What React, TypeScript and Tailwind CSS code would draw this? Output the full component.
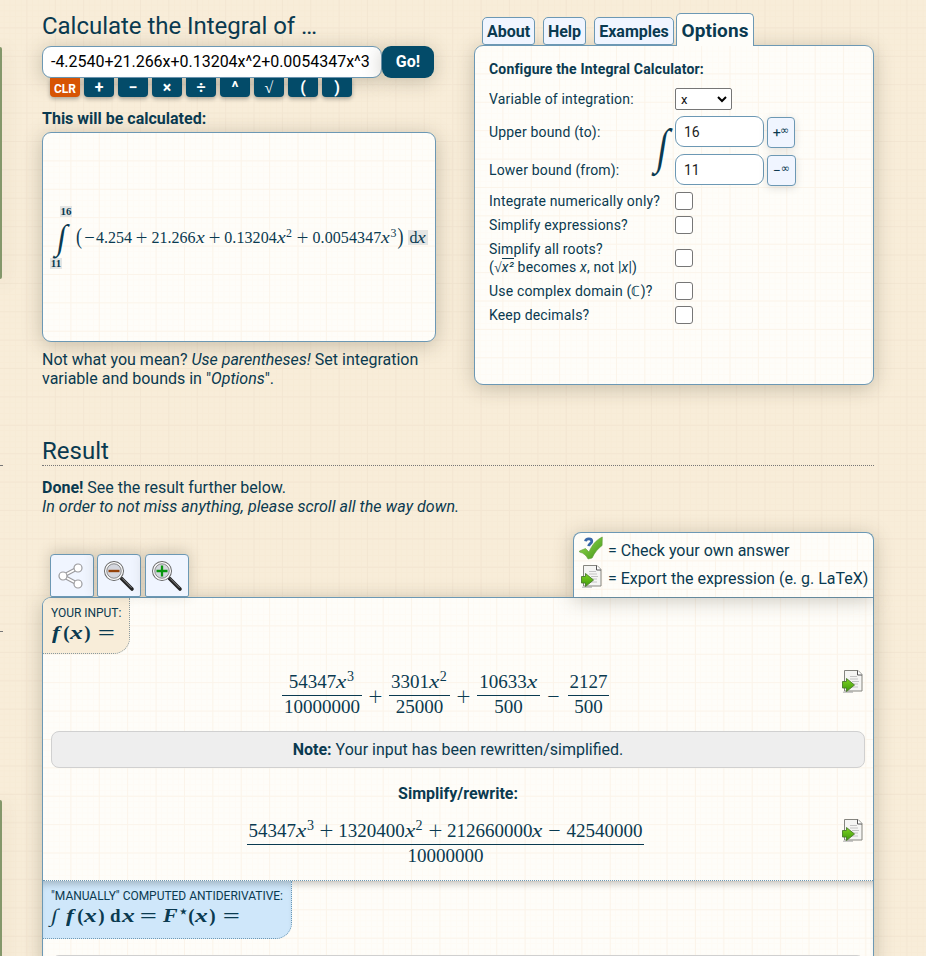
import React from "react";

type Kids = { children?: React.ReactNode };

const PANEL =
  "bg-[#fefdf9] bg-[linear-gradient(90deg,transparent_27px,#fbf4ea_27px),linear-gradient(transparent_27px,#fbf4ea_27px),linear-gradient(90deg,transparent_4.7px,#fefbf5_4.7px),linear-gradient(transparent_4.7px,#fefbf5_4.7px)] bg-[length:28.4px_28.4px,28.4px_28.4px,5.68px_5.68px,5.68px_5.68px]";
const SHADOW = "shadow-[0_3px_20px_rgba(70,60,40,0.28)]";

/* Math pieces */
const Vx = () => (
  <i className="inline-block w-[0.572em] origin-left scale-x-[1.22] text-left">x</i>
);
const Pow = ({ children }: Kids) => (
  <span className="inline-block w-[0.43em]">
    <span className="relative -top-[0.5em] inline-block text-[0.74em] leading-none">{children}</span>
  </span>
);
const Sign = ({ children }: Kids) => (
  <span className="inline-block scale-[1.3] font-['Lato',sans-serif] leading-none font-light">{children}</span>
);
const Op = ({ children }: Kids) => (
  <span className="mx-[0.222em] inline-block w-[0.778em] text-center">
    <Sign>{children}</Sign>
  </span>
);
const FracOp = ({ children, w }: { children: string; w: string }) => (
  <span className={"flex h-[52px] items-center justify-center " + w}>
    <Sign>{children}</Sign>
  </span>
);
const Frac = ({ num, den, w }: { num: React.ReactNode; den: string; w: string }) => (
  <div className={"flex flex-col items-center " + w}>
    <div className="flex h-[26px] items-center pb-px whitespace-nowrap leading-[25px]">
      <span>{num}</span>
    </div>
    <div className="h-px w-full bg-[#0a3a50]" />
    <div className="h-[24px] leading-[21px]">{den}</div>
  </div>
);
/* Bold label pieces, one fixed advance each */
const Bx = () => (
  <i className="inline-block w-[14px]">
    <span className="inline-block origin-left scale-x-[1.35]">x</span>
  </i>
);
const Bf = () => (
  <i className="inline-block w-[12px] pl-px">
    <span className="inline-block origin-left scale-x-[1.25]">f</span>
  </i>
);
const Br = ({ children }: Kids) => <span className="inline-block w-[7px] text-center">{children}</span>;
const Eq = () => (
  <span className="ml-[7px] inline-block w-[16px] text-center">
    <span className="inline-block scale-x-[1.6]">=</span>
  </span>
);

/* Icons */
const ExportIcon = () => (
  <svg width="22" height="24" viewBox="0 0 22 24" className="block">
    <defs>
      <linearGradient id="ga" x1="0" y1="0" x2="0" y2="1">
        <stop offset="0" stopColor="#7ed321" />
        <stop offset="1" stopColor="#3f9a0c" />
      </linearGradient>
    </defs>
    <path d="M1 23.200h10" stroke="#bbb" strokeWidth="1.200" />
    <path d="M2.500 1.500h13.500l4 4v16.500H2.500z" fill="#f5f5f3" stroke="#85857f" />
    <path d="M15.500 1.500v4.500H20" fill="#fff" stroke="#555" />
    <path d="M8 7.500h7M8 10h8M10 12.500h7M11 15h5M9 18h7" stroke="#c4c4c4" />
    <path d="M.5 12.500h4V9.500l8 6.500-8 6.500V19h-4z" fill="url(#ga)" stroke="#4b7a2c" strokeWidth=".9" />
  </svg>
);
const CheckIcon = () => (
  <svg width="24" height="24" viewBox="0 0 24 24" className="block">
    <defs>
      <linearGradient id="gc" x1="0" y1="0" x2="1" y2="1">
        <stop offset="0" stopColor="#9be052" />
        <stop offset="1" stopColor="#3f9418" />
      </linearGradient>
    </defs>
    <path d="M.5 15l6-2.500 3.500 3.500C13 9 17 4 23.300 1l-.2 8.500c-4 3-7.500 7-10 12.500l-4 1C7.500 20 5 17 .5 16z" fill="url(#gc)" stroke="#5f9a3c" strokeWidth=".6" />
    <path d="M6.500 5.200C7 2.300 12.500 2 12.800 5.100c.2 2.400-3 2.500-3.100 5" fill="none" stroke="#3867a8" strokeWidth="2.800" />
  </svg>
);
const ShareIcon = () => (
  <svg width="28" height="28" viewBox="0 0 28 28" className="-ml-[3px]">
    <path d="M21 6L6 14l15 8" fill="none" stroke="#9b9b9f" strokeWidth="4" />
    <path d="M21 6L6 14l15 8" fill="none" stroke="#fff" strokeWidth="1.700" />
    <g fill="#fff" stroke="#9b9b9f" strokeWidth="1.200">
      <circle cx="21" cy="6" r="4" />
      <circle cx="6" cy="14" r="4" />
      <circle cx="21" cy="22" r="4" />
    </g>
  </svg>
);
const ZoomIcon = ({ plus }: { plus?: boolean }) => (
  <svg width="32" height="32" viewBox="0 0 32 32">
    <path d="M18.500 18.500L29 29" stroke="#222" strokeWidth="3.600" strokeLinecap="round" />
    <path d="M19 18.300L28.500 27.800" stroke="#888" strokeWidth="1" />
    <circle cx="11" cy="11" r="9.200" fill="#d8d8de" stroke="#666" strokeWidth="1.600" />
    <circle cx="11" cy="11" r="8.300" fill="none" stroke="#f8f8f8" strokeWidth="1.500" />
    <circle cx="11" cy="11" r="7.200" fill="#d4d6de" stroke="#777" strokeWidth=".8" />
    {plus ? (
      <path d="M5.500 11h11M11 5.500v11" stroke="#0a960f" strokeWidth="2.300" />
    ) : (
      <path d="M5.500 11h11" stroke="#94420a" strokeWidth="2.400" />
    )}
  </svg>
);

const Key = ({ children }: Kids) => (
  <button className="flex h-[19px] w-[30px] items-center justify-center rounded-b-[4px] bg-[#034b69] pt-px text-[16px] leading-none font-bold text-white shadow-[0_2px_4px_rgba(0,0,0,0.3)]">
    {children}
  </button>
);
const Tab = ({ children, w }: { children: string; w: string }) => (
  <button className={"mb-px flex h-[28px] items-center justify-center rounded-t-[5px] rounded-b-[3px] border border-[#6c98b4] bg-[#f0f5ff] pt-px text-[16px] font-bold " + w}>
    {children}
  </button>
);
const Row = ({ label, h, children }: { label: React.ReactNode; h: string; children?: React.ReactNode }) => (
  <div className={"flex items-center " + h}>
    <div className="w-[186px] text-[14px] leading-[18px] tracking-[0.17px] whitespace-nowrap">{label}</div>
    {children}
  </div>
);
const Box = () => <div className="h-[18px] w-[18px] rounded-[3px] border border-[#767676] bg-white" />;
const Bound = ({ value, sign, w }: { value: string; sign: string; w: string }) => (
  <>
    <div className="mb-px flex h-[31px] w-[89px] items-center rounded-[9px] border border-[#6c98b4] bg-white pt-px pl-2 text-[14px] text-[#222]">
      {value}
    </div>
    <button className={"mt-px ml-[3px] flex h-[31px] items-center justify-center rounded-[4px] border border-[#6c98b4] bg-[#f0f5ff] text-[13px] shadow-[0_2px_8px_rgba(0,0,0,0.12)] " + w}>
      <span className="inline-block scale-x-[1.1]">{sign}</span>
      <span className="relative -top-[2px] text-[11px] font-['DejaVu_Sans',sans-serif]">∞</span>
    </button>
  </>
);
const ToolButton = ({ children }: Kids) => (
  <button className="flex h-[43px] w-[44px] items-center justify-center rounded-t-[4px] rounded-b-[2px] border border-[#6c98b4] bg-[#f0f5ff] shadow-[0_-3px_14px_rgba(70,60,40,0.22)]">
    {children}
  </button>
);

export default function App() {
  return (
    <div className="flex h-[956px] w-[926px] overflow-hidden bg-[#f8edd9] bg-[linear-gradient(90deg,transparent_27px,#f3e6d2_27px),linear-gradient(transparent_27px,#f3e6d2_27px),linear-gradient(90deg,transparent_4.7px,#f7ebd6_4.7px),linear-gradient(transparent_4.7px,#f7ebd6_4.7px)] bg-[length:28.4px_28.4px,28.4px_28.4px,5.68px_5.68px,5.68px_5.68px] bg-[position:-1px_0] font-['Roboto',sans-serif] text-[16px] leading-[19px] text-[#0a3a50]">
      <div className="flex w-[2px] shrink-0 flex-col">
        <div className="mt-[47px] h-[232px] shrink-0 rounded-r-[3px] bg-[#83976a] shadow-[0_3px_18px_rgba(70,60,40,0.35)]" />
        <div className="mt-[186px] shrink-0 border-t border-dotted border-[#777]" />
        <div className="mt-[165px] shrink-0 border-t border-dotted border-[#777]" />
        <div className="mt-[168px] h-[170px] shrink-0 rounded-tr-[3px] bg-[#83976a] shadow-[0_3px_18px_rgba(70,60,40,0.35)]" />
      </div>

      <main className="ml-[40px] flex w-[832px] shrink-0 flex-col">
        <div className="flex h-[430px] shrink-0 justify-between">
          {/* Expression input */}
          <section className="w-[394px]">
            <h1 className="flex h-[46px] items-center pt-[6px] text-[24px] tracking-[-0.03px] whitespace-nowrap">Calculate the Integral of …</h1>
            <div className="flex">
              <div className={"flex h-[32px] w-[340px] items-center rounded-[9px] border border-[#6c98b4] bg-white pb-[2px] pl-2 text-[16px] tracking-[-0.02px] whitespace-nowrap text-black " + SHADOW}>
                -4.2540+21.266x+0.13204x^2+0.0054347x^3
              </div>
              <button className={"h-[32px] w-[52px] rounded-[9px] bg-[#034b69] pb-px text-[16px] font-bold text-white " + SHADOW}>Go!</button>
            </div>
            <div className="flex gap-[4px] pl-[8px]">
              <button className="flex h-[19px] w-[30px] items-center justify-center rounded-b-[4px] bg-[#d75404] pt-[3px] text-[12px] font-bold text-white shadow-[0_2px_4px_rgba(0,0,0,0.3)]">CLR</button>
              <Key>+</Key>
              <Key>−</Key>
              <Key>×</Key>
              <Key>÷</Key>
              <Key>^</Key>
              <Key><span className="font-['Liberation_Serif',serif] font-normal">√</span></Key>
              <Key>(</Key>
              <Key>)</Key>
            </div>
            <div className="flex h-[35px] items-center pt-[8px] font-bold">This will be calculated:</div>
            <div className={"h-[210px] rounded-[9px] border border-[#6c98b4] pt-[72px] pl-[7px] " + PANEL + " " + SHADOW}>
              <div className="flex h-[65px] items-center font-['Liberation_Serif',serif] text-[16px] whitespace-nowrap">
                <div className="flex w-[26px] flex-col">
                  <span className="ml-[10px] w-[12px] bg-[#e4e5e4] text-center text-[11px] leading-[11px] font-bold">16</span>
                  <span className="flex h-[41px] w-[24px] items-center justify-center">
                    <span className="inline-block scale-x-[0.9] -skew-x-[10deg] text-[35px] leading-none">∫</span>
                  </span>
                  <span className="w-[12px] bg-[#e4e5e4] text-center text-[11px] leading-[11px] font-bold">11</span>
                </div>
                <span className="inline-block w-[8px] scale-y-[1.25] text-[18px]">(</span>
                <span className="inline-block w-[12px] text-center"><Sign>−</Sign></span>
                <span>4.254</span><Op>+</Op><span>21.266</span><Vx /><Op>+</Op><span className="tracking-[0.1px]">0.13204</span><Vx /><Pow>2</Pow>
                <Op>+</Op><span className="tracking-[0.1px]">0.0054347</span><Vx /><Pow>3</Pow>
                <span className="inline-block w-[8px] scale-y-[1.25] text-[18px]">)</span>
                <span className="ml-[3px] bg-[#e4e5e4] pr-px pl-px leading-[15px]">d<Vx /></span>
              </div>
            </div>
            <p className="mt-[8px] whitespace-nowrap">
              Not what you mean? <i>Use parentheses!</i> Set integration<br />
              variable and bounds in "<i>Options</i>".
            </p>
          </section>

          {/* Options */}
          <section className="w-[400px] pt-[13px]">
            <div className="relative z-10 flex h-[33px] items-end pl-[8px]">
              <Tab w="w-[53px]">About</Tab>
              <Tab w="ml-[8px] w-[43px]">Help</Tab>
              <Tab w="ml-[8px] w-[80px]">Examples</Tab>
              <button className="ml-[2px] h-[33px] w-[78px] rounded-t-[5px] border border-b-0 border-[#6c98b4] bg-[#fefdf9] pt-px text-[19px] font-bold tracking-[0.1px]">Options</button>
            </div>
            <div className={"-mt-px h-[340px] rounded-[9px] border border-[#6c98b4] pt-[7px] pl-[14px] " + PANEL + " " + SHADOW}>
              <div className="flex h-[32px] items-center text-[14px] font-bold tracking-[0.17px]">Configure the Integral Calculator:</div>
              <Row h="h-[28px]" label="Variable of integration:">
                <div className="flex h-[22px] w-[57px] items-center justify-between rounded-[2px] border border-[#767676] bg-white pr-[4px] pl-[5px] text-[13px] text-[#111]">
                  x
                  <svg width="10" height="7" viewBox="0 0 10 7"><path d="M1 1l4 4 4-4" fill="none" stroke="#000" strokeWidth="2" /></svg>
                </div>
              </Row>
              <div className="relative">
                <span className="absolute top-[8px] left-[167px] inline-block scale-x-[0.75] -skew-x-[12deg] font-['Liberation_Serif',serif] text-[49px] leading-[52px]">∫</span>
                <Row h="h-[38px]" label="Upper bound (to):"><Bound value="16" sign="+" w="w-[28px]" /></Row>
                <Row h="h-[38px]" label="Lower bound (from):"><Bound value="11" sign="−" w="w-[29px]" /></Row>
              </div>
              <Row h="h-[24px]" label="Integrate numerically only?"><Box /></Row>
              <Row h="h-[24px]" label="Simplify expressions?"><Box /></Row>
              <Row h="h-[42px]" label={<>Simplify all roots?<br />(<span className="font-['Liberation_Serif',serif]">√</span><i className="border-t border-[#0a3a50]">x²</i> becomes <i>x</i>, not |<i>x</i>|)</>}><Box /></Row>
              <Row h="h-[24px]" label="Use complex domain (ℂ)?"><Box /></Row>
              <Row h="h-[24px]" label="Keep decimals?"><Box /></Row>
            </div>
          </section>
        </div>

        {/* Result */}
        <h2 className="flex h-[36px] shrink-0 items-center border-b border-dotted border-[#777] pt-[7px] text-[24px]">Result</h2>
        <p className="mt-[12px] h-[54px] shrink-0 whitespace-nowrap">
          <b>Done!</b> See the result further below.<br />
          <i className="tracking-[0.05px]">In order to not miss anything, please scroll all the way down.</i>
        </p>
        <div className="relative z-10 flex h-[65px] shrink-0 items-end justify-between">
          <div className="flex gap-[3px] pl-[8px]">
            <ToolButton><ShareIcon /></ToolButton>
            <ToolButton><ZoomIcon /></ToolButton>
            <div className="pl-px"><ToolButton><ZoomIcon plus /></ToolButton></div>
          </div>
          <div className={"h-[65px] w-[301px] shrink-0 rounded-t-[8px] border border-b-0 border-[#6c98b4] pt-[3px] pl-[5px] whitespace-nowrap " + PANEL + " " + SHADOW}>
            <div className="flex h-[28px] items-center gap-[5px]"><span className="-mt-[4px]"><CheckIcon /></span>= Check your own answer</div>
            <div className="flex h-[28px] items-center gap-[5px] pl-[2px]"><span className="-mt-[4px]"><ExportIcon /></span>= Export the expression (e. g. LaTeX)</div>
          </div>
        </div>
        <div className={"h-[370px] shrink-0 rounded-tl-[9px] border border-b-0 border-[#6c98b4] " + PANEL + " " + SHADOW}>
          <div className="h-[283px] border-b border-dotted border-[#6c98b4]">
            <div className="h-[56px] w-[87px] rounded-tl-[8px] rounded-br-[16px] border-r border-b border-dotted border-[#8a9aa0] bg-[#f8edd9] pt-[6px] pl-[8px] whitespace-nowrap">
              <div className="text-[12px] leading-[18px] tracking-[-0.03px]">YOUR INPUT:</div>
              <div className="flex font-['Liberation_Serif',serif] text-[19px] leading-[21px] font-bold"><Bf /><Br>(</Br><Bx /><Br>)</Br><Eq /></div>
            </div>
            <div className="flex h-[77px] pt-[15px] pl-[239px] font-['Liberation_Serif',serif] text-[19px]">
              <Frac w="w-[80px]" num={<>54347<Vx /><Pow>3</Pow></>} den="10000000" />
              <FracOp w="w-[27px]">+</FracOp>
              <Frac w="w-[61px]" num={<>3301<Vx /><Pow>2</Pow></>} den="25000" />
              <FracOp w="w-[27px]">+</FracOp>
              <Frac w="w-[63px]" num={<>10633<Vx /></>} den="500" />
              <FracOp w="w-[28px]">−</FracOp>
              <Frac w="w-[41px]" num="2127" den="500" />
              <div className="ml-[233px]"><ExportIcon /></div>
            </div>
            <div className="mx-[8px] flex h-[37px] items-center justify-center gap-[4px] rounded-[8px] border border-[#d0d0d0] bg-[#eee]">
              <b>Note:</b> Your input has been rewritten/simplified.
            </div>
            <div className="flex h-[50px] items-center justify-center font-bold">Simplify/rewrite:</div>
            <div className="flex pl-[204px] font-['Liberation_Serif',serif] text-[19px]">
              <Frac w="w-[397px]" num={<>54347<Vx /><Pow>3</Pow><Op>+</Op>1320400<Vx /><Pow>2</Pow><Op>+</Op>212660000<Vx /><Op>−</Op>42540000</>} den="10000000" />
              <div className="ml-[198px]"><ExportIcon /></div>
            </div>
          </div>
          <div className="h-[87px] shadow-[inset_0_7px_7px_-4px_rgba(0,0,0,0.22)]">
            <div className="h-[58px] w-[249px] rounded-br-[16px] border-r border-b border-dotted border-[#6c98b4] bg-[#cfe7fa] pt-[6px] pl-[8px] whitespace-nowrap shadow-[inset_0_7px_7px_-4px_rgba(0,0,0,0.22)]">
              <div className="text-[12px] leading-[18px] tracking-[-0.02px]">"MANUALLY" COMPUTED ANTIDERIVATIVE:</div>
              <div className="flex font-['Liberation_Serif',serif] text-[19px] leading-[21px] font-bold">
                <span className="w-[14px]"><span className="inline-block -skew-x-[10deg] scale-x-[1.15] pl-px">∫</span></span>
                <Bf /><Br>(</Br><Bx /><Br>)</Br>
                <span className="ml-[5px] w-[12px]">d</span><Bx /><span className="-ml-[3px]"><Eq /></span>
                <i className="ml-[7px] w-[16px]"><span className="inline-block origin-left scale-x-[1.15]">F</span></i>
                <span className="relative -top-[4px] w-[9px] text-[14px]">⋆</span>
                <Br>(</Br><Bx /><Br>)</Br><Eq />
              </div>
            </div>
            <div className="mx-[8px] mt-[16px] h-[37px] rounded-[8px] border border-[#d0d0d0] bg-[#eee]" />
          </div>
        </div>
      </main>
    </div>
  );
}
